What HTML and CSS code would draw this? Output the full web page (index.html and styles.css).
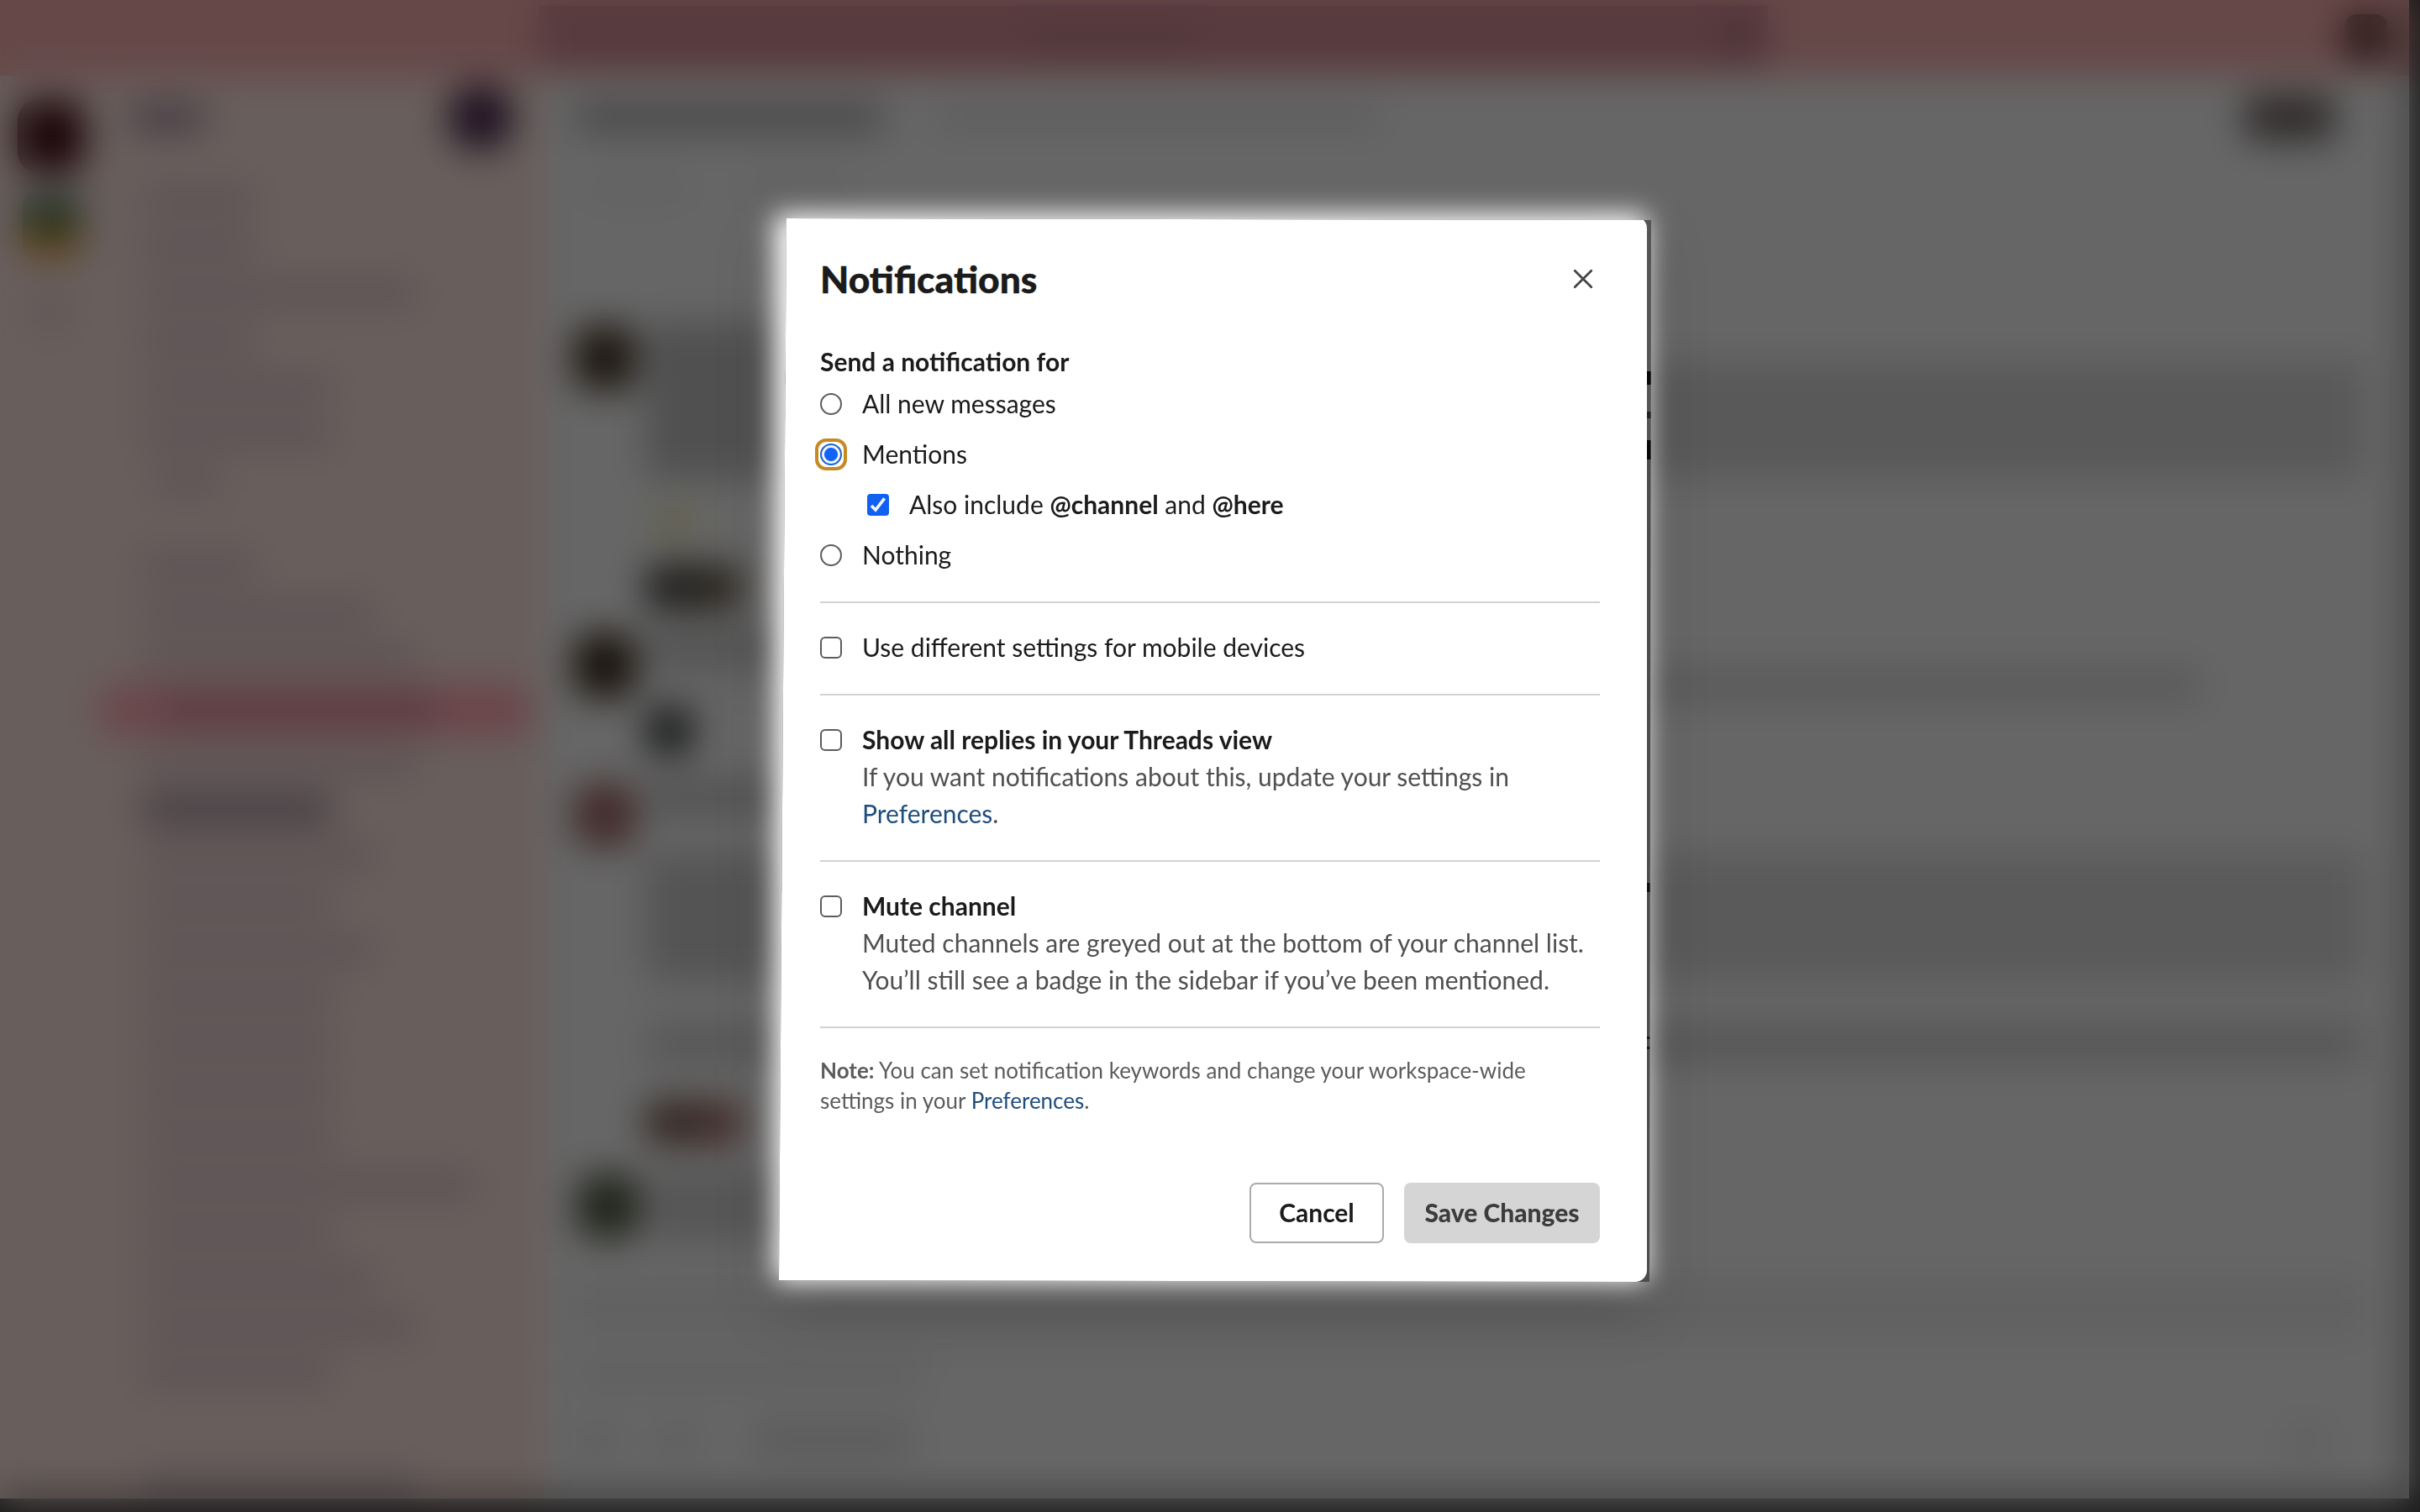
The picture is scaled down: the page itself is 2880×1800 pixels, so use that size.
FILE: index.html
```html
<!DOCTYPE html>
<html lang="en">
<head>
<meta charset="utf-8">
<title>Notifications</title>
<link rel="stylesheet" href="styles.css">
</head>
<body>
<div class="app" aria-hidden="true">
  <header class="topbar"><div class="search"><i class="search-hint"></i><i class="search-help"></i></div><i class="me"></i></header>
  <div class="workspace">
    <nav class="rail"><i class="team"></i><i class="team-alt"></i><i class="rail-add"></i></nav>
    <aside class="sidebar">
      <div class="side-head"><i class="side-name"></i><i class="compose"></i></div>
      <div class="rows">
        <i class="row w-s"></i><i class="row w-s"></i><i class="row w-xl"></i><i class="row w-s"></i><i class="row w-m"></i><i class="row w-m"></i><i class="row w-xs"></i>
      </div>
      <div class="rows rows-channels">
        <i class="row w-s"></i><i class="row w-l"></i><i class="row w-xl"></i>
        <div class="row-active"><i class="row w-xl strong"></i></div>
        <i class="row w-xl"></i><i class="row w-m strong"></i><i class="row w-l"></i><i class="row w-m"></i><i class="row w-l"></i><i class="row w-m"></i><i class="row w-m"></i><i class="row w-m"></i><i class="row w-m"></i><i class="row w-xxl"></i><i class="row w-m"></i><i class="row w-l"></i><i class="row w-xl"></i><i class="row w-m"></i>
        <i class="row w-xl row-last"></i>
      </div>
    </aside>
    <main class="channel">
      <div class="channel-head"><i class="channel-name"></i><i class="channel-topic"></i><i class="members"></i></div>
      <div class="bookmarks"><i class="bookmark"></i><i class="bookmark"></i></div>
      <section class="post post-a"><i class="avatar"></i><div class="body"><i class="para"></i><i class="emoji"></i><i class="reaction"></i></div></section>
      <section class="post post-b"><i class="avatar avatar-b"></i><div class="body"><i class="meta"></i><i class="line"></i><i class="reaction reaction-s"></i></div></section>
      <section class="post post-c"><i class="avatar avatar-c"></i><div class="body"><i class="meta"></i><i class="para para-c"></i><i class="line line-c"></i><i class="reaction reaction-c"></i></div></section>
      <section class="post post-d"><i class="avatar avatar-d"></i><div class="body"><i class="meta meta-d"></i></div></section>
      <div class="composer"><i class="hint"></i><div class="tools"><i class="tool"></i><i class="tool"></i><i class="tool tool-wide"></i><i class="tool send"></i></div></div>
    </main>
  </div>
</div>
<div class="scrim">
  <div class="dialog" role="dialog" aria-labelledby="title">
    <div class="frame">
      <form class="pane">
        <header class="head">
          <h1 class="title" id="title">Notifications</h1>
          <button class="close" type="button" aria-label="Close"><svg width="26" height="26" viewBox="0 0 26 26"><path d="M3.2 3.2l19.6 19.6M22.8 3.2L3.2 22.8" fill="none" stroke="#454545" stroke-width="2.8" stroke-linecap="round"/></svg></button>
        </header>
        <section class="group group-first">
          <h2 class="label">Send a notification for</h2>
          <div class="options">
            <label class="option"><span class="box radio"></span><span>All new messages</span></label>
            <label class="option"><span class="box radio radio-on"></span><span>Mentions</span></label>
            <label class="option option-nested"><span class="box check-on"><svg width="26" height="26" viewBox="0 0 26 26"><path d="M5 14l5 5L20.6 5.4" fill="none" stroke="#f2f8ff" stroke-width="3.6"/></svg></span><span>Also include <b>@channel</b> and <b>@here</b></span></label>
            <label class="option"><span class="box radio"></span><span>Nothing</span></label>
          </div>
        </section>
        <section class="group"><label class="option"><span class="box"></span><span>Use different settings for mobile devices</span></label></section>
        <section class="group"><label class="option"><span class="box"></span><span><b>Show all replies in your Threads view</b><span class="help">If you want notifications about this, update your settings in <a class="link">Preferences</a>.</span></span></label></section>
        <section class="group"><label class="option"><span class="box"></span><span><b>Mute channel</b><span class="help">Muted channels are greyed out at the bottom of your channel list. You’ll still see a badge in the sidebar if you’ve been mentioned.</span></span></label></section>
        <p class="note"><b>Note:</b> You can set notification keywords and change your workspace-wide<br>settings in your <a class="link">Preferences</a>.</p>
        <footer class="actions"><button class="btn btn-plain" type="button">Cancel</button><button class="btn btn-save" type="button">Save Changes</button></footer>
      </form>
    </div>
  </div>
</div>
</body>
</html>
```

FILE: styles.css
```css
* { box-sizing: border-box; }
html, body { height: 100%; }
body { margin: 0; overflow: hidden; background: #1c1b1b; color: #1b1b1b; font: 30px/44px Lato, "Open Sans", sans-serif; }
i { display: block; flex: none; border-radius: 14px; }

/* dimmed workspace */
.app { width: 2867px; height: 1784px; background: #666; overflow: hidden; }
.topbar { height: 90px; display: flex; align-items: center; justify-content: space-between; padding: 0 26px 0 642px; background: #664848; }
.search { width: 1462px; height: 76px; display: flex; align-items: center; justify-content: space-between; padding: 0 8px 0 580px; background: #573a3d; }
.search-hint { width: 200px; height: 18px; background: #4e3437; }
.search-help { width: 44px; height: 40px; background: #4a3038; }
.me { width: 50px; height: 56px; background: #241714; }
.workspace { height: 1694px; display: flex; }
.rail { width: 115px; flex: none; display: flex; flex-direction: column; align-items: center; padding: 29px 0 0 7px; background: #685e5c; }
.team { width: 80px; height: 86px; border-radius: 24px; background: #1c060a; }
.team-alt { width: 68px; height: 78px; margin-top: 24px; background: linear-gradient(#2c3839, #1f3015 50%, #5c4018 70%, #60461e); }
.rail-add { width: 40px; height: 50px; margin-top: 40px; background: #605656; }
.sidebar { width: 532px; flex: none; background: #685e5c; }
.side-head { height: 100px; display: flex; align-items: center; justify-content: space-between; padding: 0 36px 0 40px; }
.side-name { width: 90px; height: 34px; background: #463c43; }
.compose { width: 78px; height: 78px; border-radius: 39px; background: #1e101f; }
.rows { display: flex; flex-direction: column; gap: 24px; padding: 30px 0 0 30px; }
.rows-channels { padding-top: 68px; }
.row { height: 34px; margin-bottom: -2px; background: #5e5355; }
.strong { background: #463d43; }
.w-xs { width: 80px; margin-left: 38px; }
.w-s { width: 140px; margin-left: 20px; }
.w-m { width: 230px; margin-left: 22px; }
.w-l { width: 280px; margin-left: 22px; }
.w-xl { width: 330px; margin-left: 22px; }
.w-xxl { width: 400px; margin-left: 22px; }
.row-active { width: 512px; height: 58px; margin: -8px 0 -8px -24px; padding: 14px 0 0 48px; border-radius: 12px; background: #6c4549; }
.row-active .strong { height: 30px; background: #583a40; }
.row-last { margin-top: 74px; }

.channel { flex: 1; padding: 0 54px 0 36px; background: #666; }
.channel-head { height: 100px; display: flex; align-items: center; padding-right: 34px; }
.channel-name { width: 370px; height: 38px; background: #4a4a4a; }
.channel-topic { width: 530px; height: 26px; margin-left: 60px; background: #5c5c5c; }
.members { width: 108px; height: 54px; margin-left: auto; background: #2f2a2a; }
.bookmarks { height: 72px; display: flex; gap: 60px; align-items: center; padding-left: 10px; }
.bookmark { width: 130px; height: 22px; background: #606060; }
.post { display: flex; gap: 12px; }
.post-a { height: 366px; margin-top: 122px; }
.post-b { height: 178px; }
.post-c { height: 466px; }
.post-d { height: 112px; }
.avatar { width: 74px; height: 76px; margin-top: 4px; border-radius: 24px; background: #1c160f; }
.avatar-b { background: #17110b; }
.avatar-c { background: #412a29; }
.avatar-d { margin-left: 4px; background: #1f231a; }
.body { flex: 1; display: flex; flex-direction: column; }
.para { height: 186px; background: linear-gradient(90deg, #505050 180px, #5a5a5a 260px, #595959 1260px); clip-path: polygon(0 0, 220px 0, 220px 46px, 100% 46px, 100% 100%, 0 100%); }
.emoji { width: 46px; height: 40px; margin: 34px 0 0 10px; background: #636048; }
.reaction { width: 114px; height: 54px; margin-top: 28px; background: linear-gradient(90deg, #1a1b1b, #2b251d); }
.meta { width: 220px; height: 42px; background: #525252; }
.line { width: 1850px; height: 40px; margin-top: 4px; background: linear-gradient(90deg, #646464 200px, #595959 600px); }
.reaction-s { width: 56px; height: 56px; margin-top: 6px; background: #1a1b1c; }
.para-c { height: 152px; margin: 46px 0 0; background: linear-gradient(90deg, #545454 200px, #5a5a5a 1260px); clip-path: none; }
.line-c { width: auto; height: 48px; margin-top: 50px; background: #575757; }
.reaction-c { margin-top: 44px; height: 52px; background: linear-gradient(90deg, #2a221d, #402a27 80%); }
.meta-d { height: 84px; background: #565656; }
.composer { height: 260px; margin-top: 16px; border-top: 70px solid #616161; padding-top: 30px; }
.hint { width: 420px; height: 32px; background: #5f5f5f; }
.tools { display: flex; gap: 40px; margin-top: 42px; }
.tool { width: 56px; height: 38px; background: #5e5e5e; }
.tool-wide { width: 190px; margin-left: 20px; background: #5a5a5a; }
.send { margin-left: auto; margin-right: 40px; background: #606060; }

/* dialog */
.scrim { position: fixed; inset: 0; padding: 258px 0 0 927px; backdrop-filter: blur(22px); }
.dialog { position: relative; width: 1038px; height: 1268px; }
.dialog::before { content: ""; position: absolute; inset: -3px 5px 0 -5px; background: #fff; filter: blur(16px) drop-shadow(0 30px 30px rgba(0, 0, 0, .18)); }
.frame { position: relative; height: 100%; clip-path: polygon(9px 2px, 1038px 4px, 1036px 1268px, 0 1266px); background: linear-gradient(#555 184px, #080808 184px 200px, #555 200px 232px, #222 232px 240px, #555 240px 266px, #080808 266px 289px, #4c4c4c 289px 793px, #111 793px 804px, #4c4c4c 804px 976px, #151515 976px 979px, #4c4c4c 979px 988px, #151515 988px 991px, #4c4c4c 991px); }
.pane { width: 1033px; height: 1268px; padding: 44px 56px 46px 49px; border-radius: 0 14px 14px 0; background: #fff; }
.head { display: flex; justify-content: space-between; height: 60px; }
.title { margin: 0; font-size: 44.4px; line-height: 60px; font-weight: 900; -webkit-text-stroke: .4px #1b1b1b; }
.close { width: 26px; height: 26px; margin: 17px 7px 0 0; padding: 0; border: 0; background: none; }
.close svg, .box svg { display: block; }
.group { padding: 30px 0 34px; border-bottom: 2px solid #d2d2d2; }
.group-first { padding-top: 46px; }
.label { margin: 0 0 6px; font-size: 30px; line-height: 44px; font-weight: 700; }
.options { display: flex; flex-direction: column; gap: 16px; }
.option { display: flex; gap: 24px; }
.option-nested { padding-left: 56px; }
.box { flex: none; width: 26px; height: 26px; margin-top: 10px; border: 2px solid #5c5c5c; border-radius: 6px; background: #fff; }
.radio { border-radius: 50%; }
.radio-on { position: relative; border-color: #2162c4; background: radial-gradient(circle, #1264f5 7.5px, #eef5ff 8.5px); }
.radio-on::after { content: ""; position: absolute; inset: -8px; border: 4px solid #c58a24; border-radius: 13px; }
.check-on { border: 0; border-radius: 4px; background: #1260f2; }
.help { display: block; color: #505050; }
.link { color: #1f4e7c; }
.note { margin: 32px 0 80px; font-size: 26px; line-height: 36px; color: #5c5c5c; }
.actions { display: flex; justify-content: flex-end; gap: 24px; }
.btn { height: 72px; padding: 0 0 2px; border: 0; border-radius: 8px; font: 700 30px/40px Lato, sans-serif; color: #1b1b1b; }
.btn-plain { width: 160px; border: 2px solid #ababab; background: #fff; }
.btn-save { width: 233px; background: #d5d5d5; font-weight: 900; color: #3c3c3c; }
```
